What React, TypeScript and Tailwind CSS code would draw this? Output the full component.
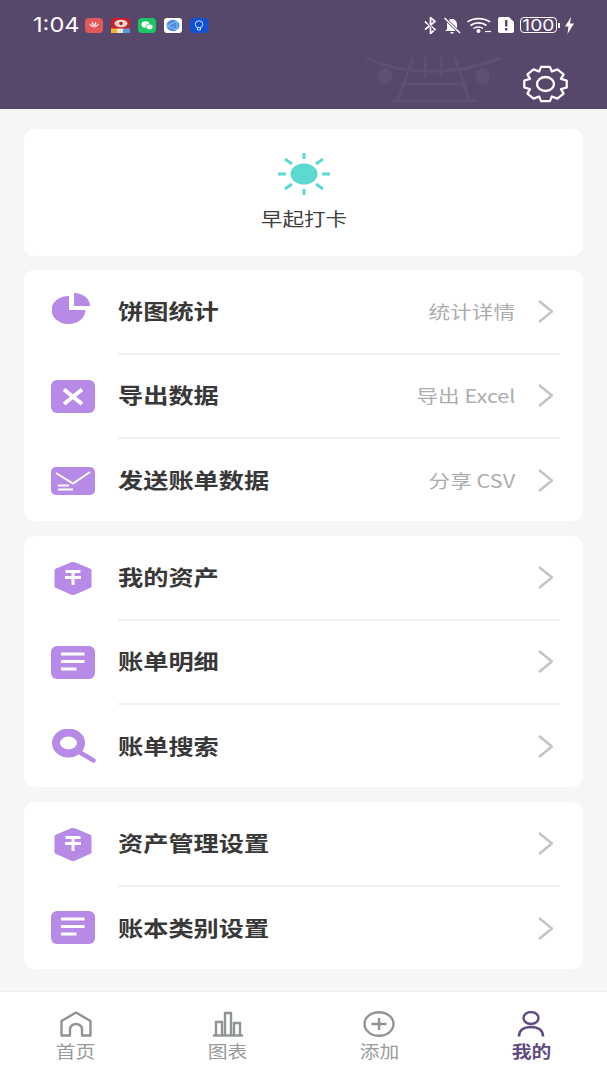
import React from "react";

const PURPLE = "#b68ae6";
const font = { fontFamily: '"Noto Sans CJK SC", "Noto Sans", sans-serif' };

function T({ children, className = "" }: { children: React.ReactNode; className?: string }) {
  return <span className={"inline-block whitespace-nowrap scale-x-[1.2] " + className}>{children}</span>;
}

function Svg({ w, h, vb, children, className = "" }: { w: number; h: number; vb: string; children: React.ReactNode; className?: string }) {
  return (
    <svg width={w} height={h} viewBox={vb} preserveAspectRatio="none" className={"block shrink-0 " + className}>
      {children}
    </svg>
  );
}

const PieIcon = () => (
  <Svg w={38} h={31} vb="0 0 38 31" className="mb-[7px]">
    <path d="M17 3A17 14 0 1 0 33.500 17H17z" fill={PURPLE} />
    <path d="M22 0A16 13 0 0 1 38 13H22z" fill={PURPLE} />
  </Svg>
);
const XIcon = () => (
  <Svg w={44} h={33} vb="0 0 44 33">
    <rect width="44" height="33" rx="6" fill={PURPLE} />
    <path d="M13 9.500l18 14.500M31 9.500L13 24" stroke="#fff" strokeWidth="4" />
  </Svg>
);
const MailIcon = () => (
  <Svg w={44} h={28} vb="0 0 44 28" className="mt-[1px]">
    <rect width="44" height="28" rx="5" fill={PURPLE} />
    <path d="M5 6l17 10.500L39 5" stroke="#fff" strokeWidth="2" fill="none" />
    <path d="M7 18.500h11M7 22.500h15" stroke="#fff" strokeWidth="2" />
  </Svg>
);
const HexIcon = () => (
  <Svg w={38} h={33} vb="0 0 38 33">
    <path d="M19 0l18 7.500v17.500L19 33 1 25V7.500z" fill={PURPLE} stroke={PURPLE} strokeLinejoin="round" />
    <path d="M11.500 9.500h15M11 15.500h16M19 10v13" stroke="#fff" strokeWidth="3" />
  </Svg>
);
const ListIcon = () => (
  <Svg w={44} h={33} vb="0 0 44 33">
    <rect width="44" height="33" rx="6" fill={PURPLE} />
    <path d="M10 8h23.500M10 15.500h23.500M10 23h15.500" stroke="#fff" strokeWidth="2.800" />
  </Svg>
);
const SearchIcon = () => (
  <Svg w={44} h={34} vb="0 0 44 34">
    <ellipse cx="16.500" cy="14" rx="12.500" ry="10.500" fill="none" stroke={PURPLE} strokeWidth="8" />
    <path d="M29 24l12.500 7.500" stroke={PURPLE} strokeWidth="4.500" strokeLinecap="round" />
  </Svg>
);

const Chevron = () => (
  <Svg w={15} h={23} vb="0 0 15 23">
    <path d="M1 1l13 10.500L1 22" fill="none" stroke="#c4c4c4" strokeWidth="2.600" />
  </Svg>
);

function Row({ icon, title, sub, last, iconOffset = 27 }: { icon: React.ReactNode; title: string; sub?: string; last?: boolean; iconOffset?: number }) {
  return (
    <div className={"flex items-stretch " + (last ? "flex-1" : "h-[84.500px] shrink-0")}>
      <div className="flex w-[94px] shrink-0 items-center" style={{ paddingLeft: iconOffset }}>{icon}</div>
      <div className={"mr-[23px] flex flex-1 items-center pr-[7px] " + (last ? "pt-[1px]" : "border-b-2 border-[#f1f1f1]")}>
        <T className="-mt-[2px] origin-left text-[21px] font-semibold text-[#383838]">{title}</T>
        <div className="flex-1" />
        {sub && <T className="mr-[23px] origin-right text-[18px] text-[#adadad]">{sub}</T>}
        <Chevron />
      </div>
    </div>
  );
}

function Card({ h, children, className = "" }: { h: number; children: React.ReactNode; className?: string }) {
  return (
    <div className={"mx-[24px] flex shrink-0 flex-col overflow-hidden rounded-[10px] bg-white " + className} style={{ height: h }}>
      {children}
    </div>
  );
}

function AppIcons() {
  return (
    <div className="ml-[7px] flex items-center gap-[8px]">
      <Svg w={18} h={15} vb="0 0 18 15">
        <rect width="18" height="15" rx="4" fill="#e25858" />
        <path d="M9 9C7 7 6 5 7 3.500 8 4 9 6 9 9c0-3 1-5 2-5.500C12 5 11 7 9 9zM9 9.500C7 9 4.500 8 4 5.500 6 6 8 8 9 9.500zm0 0c1-1.500 3-3.500 5-4-.5 2.500-3 3.500-5 4z" fill="#fff" opacity=".85" />
      </Svg>
      <Svg w={19} h={15} vb="0 0 19 15">
        <rect width="19" height="15" rx="3" fill="#c9202a" />
        <ellipse cx="10" cy="5.500" rx="6.500" ry="3.800" fill="#f3d9d2" />
        <circle cx="10" cy="5.500" r="1.800" fill="#c9202a" />
        <rect y="10.500" width="6" height="4.500" fill="#f2b632" />
        <rect x="6" y="10.500" width="6" height="4.500" fill="#f0e9d8" />
        <rect x="12" y="10.500" width="7" height="4.500" fill="#5b9bd8" />
      </Svg>
      <Svg w={18} h={15} vb="0 0 18 15">
        <rect width="18" height="15" rx="4" fill="#1fc465" />
        <ellipse cx="7.500" cy="6.500" rx="4" ry="3.300" fill="#fff" />
        <ellipse cx="11.500" cy="8.800" rx="3.500" ry="2.800" fill="#fff" stroke="#1fc465" strokeWidth=".7" />
      </Svg>
      <Svg w={18} h={15} vb="0 0 18 15">
        <rect width="18" height="15" rx="3" fill="#fff" />
        <ellipse cx="9" cy="7.500" rx="6.500" ry="5.800" fill="#4a90dc" />
        <path d="M3 8l10-5M3 8l10 4M13 3v9" stroke="#cfe3f7" strokeWidth=".6" fill="none" />
      </Svg>
      <Svg w={18} h={15} vb="0 0 18 15">
        <rect width="18" height="15" rx="4" fill="#0d52d6" />
        <ellipse cx="9" cy="6.300" rx="3.800" ry="3.500" fill="none" stroke="#cfe0ff" strokeWidth="1" />
        <path d="M7.500 10v2h3v-2" fill="none" stroke="#cfe0ff" strokeWidth="1" />
      </Svg>
    </div>
  );
}

function StatusRight() {
  return (
    <div className="flex items-center">
      <Svg w={12} h={17} vb="0 0 12 17" className="mr-[7px]">
        <path d="M1 4.500l10 8-4.500 4V.5L11 4.500 1 12.500" fill="none" stroke="#fff" strokeWidth="1.700" />
        <path d="M0 1l12 15" stroke="#57476a" strokeWidth="1" />
      </Svg>
      <Svg w={18} h={17} vb="0 0 18 17" className="mr-[6px]">
        <path d="M4 12.500V7.500C4 4 6.500 2 9 2s5 2 5 5.500v5l2 1.500H2z" fill="#fff" />
        <path d="M7.500 15h3v1.500h-3z" fill="#fff" />
        <path d="M1.500 1L17 16" stroke="#57476a" strokeWidth="3" />
        <path d="M1.500 1L17 16" stroke="#fff" strokeWidth="1.500" />
      </Svg>
      <Svg w={25} h={16} vb="0 0 25 16" className="mr-[6px]">
        <path d="M0.500 5C6 .5 17 .5 23 5M3.500 8.500C8 5 15 5 19.500 8.500M6.500 11.500C9 9.500 13.500 9.500 16 11.500" fill="none" stroke="#fff" strokeWidth="1.600" />
        <circle cx="11.500" cy="14" r="2" fill="#fff" />
        <path d="M18 14.500h6" stroke="#fff" strokeWidth="1.200" />
      </Svg>
      <Svg w={16} h={16} vb="0 0 16 16" className="mr-[6px]">
        <path d="M2 0h9l5 5v9a2 2 0 0 1-2 2H2a2 2 0 0 1-2-2V2a2 2 0 0 1 2-2z" fill="#fff" />
        <path d="M7 3h2.400v6.500H7zM7 11h2.400v2.500H7z" fill="#57476a" />
      </Svg>
      <div className="flex h-[16px] w-[37px] items-center justify-center rounded-[4px] border border-white text-[16px] leading-none text-white" style={{ fontFamily: "Inter, sans-serif" }}>
        <T>100</T>
      </div>
      <div className="ml-[1px] mr-[5px] h-[5px] w-[2px] bg-white" />
      <Svg w={9} h={17} vb="0 0 9 17">
        <path d="M6 0L0 9.500h3.500L2.500 17 9 6.500H5z" fill="#fff" />
      </Svg>
    </div>
  );
}

function gearPoints() {
  const pts: string[] = [];
  const cx = 23.5;
  const cy = 19;
  const n = 8;
  for (let i = 0; i < n; i++) {
    const a = (i * 2 * Math.PI) / n - Math.PI / 2;
    const s = (2 * Math.PI) / n;
    const steps: [number, number][] = [
      [-0.5, 13.5],
      [-0.26, 17.5],
      [0.26, 17.5],
      [0.5, 13.5],
    ];
    for (const [off, r] of steps) {
      const t = a + off * s;
      pts.push(`${(cx + Math.cos(t) * r * 1.24).toFixed(1)},${(cy + Math.sin(t) * r).toFixed(1)}`);
    }
  }
  return pts.join(" ");
}

const Gear = () => (
  <Svg w={47} h={38} vb="0 0 47 38">
    <polygon points={gearPoints()} fill="none" stroke="#fff" strokeWidth="2.300" strokeLinejoin="round" />
    <ellipse cx="23.500" cy="19" rx="8.500" ry="7" fill="none" stroke="#fff" strokeWidth="2.300" />
  </Svg>
);

const tabIconColor = "#8f9494";
const tabs = [
  {
    label: "首页",
    icon: (
      <Svg w={32} h={26} vb="0 0 32 26">
        <path d="M1.500 24.500V10L16 1.500 30.500 10v14.500H22V18a6 5 0 0 0-12 0v6.500z" fill="none" stroke={tabIconColor} strokeWidth="2.400" strokeLinejoin="round" />
      </Svg>
    ),
  },
  {
    label: "图表",
    icon: (
      <Svg w={30} h={26} vb="0 0 30 26">
        <path d="M0 24.500h30" stroke={tabIconColor} strokeWidth="2.400" />
        <path d="M3 25V11h6v14M12 25V2h6v23M21 25V12h6v13" fill="none" stroke={tabIconColor} strokeWidth="2.400" />
      </Svg>
    ),
  },
  {
    label: "添加",
    icon: (
      <Svg w={32} h={26} vb="0 0 32 26">
        <ellipse cx="16" cy="13" rx="14.500" ry="11.800" fill="none" stroke={tabIconColor} strokeWidth="2.400" />
        <path d="M8.500 13h15M16 7v12" stroke={tabIconColor} strokeWidth="2.400" />
      </Svg>
    ),
  },
  {
    label: "我的",
    active: true,
    icon: (
      <Svg w={28} h={26} vb="0 0 28 26">
        <ellipse cx="14" cy="7" rx="7.500" ry="6" fill="none" stroke="#5f4b80" strokeWidth="2.400" />
        <path d="M2 25.500C2 19 7 16 14 16s12 3 12 9.500" fill="none" stroke="#5f4b80" strokeWidth="2.600" />
      </Svg>
    ),
  },
];

export default function App() {
  return (
    <div className="flex h-[1080px] w-[607px] flex-col overflow-hidden bg-[#f6f6f6]" style={font}>
      <header className="relative h-[109px] shrink-0 bg-[#57476a]">
        <svg width="140" height="55" viewBox="0 0 140 55" className="absolute left-[363px] top-[52px]">
          <g fill="none" stroke="#5f4f74" strokeWidth="3">
            <path d="M3 6c40 18 90 18 134 0" />
            <path d="M50 6L35 48M62 5v20M78 5v20M92 6l14 42M38 32h66M28 49h85" />
          </g>
          <ellipse cx="22" cy="24" rx="7" ry="8" fill="#5f4f74" />
          <ellipse cx="120" cy="24" rx="7" ry="8" fill="#5f4f74" />
        </svg>
        <div className="relative flex h-[34px] items-center justify-between pl-[33px] pr-[33px] pt-[16px]">
          <div className="flex items-center">
            <span className="inline-block w-[45px] origin-left scale-x-[1.15] text-[20.500px] leading-none text-white" style={{ fontFamily: "Inter, sans-serif" }}>1:04</span>
            <AppIcons />
          </div>
          <StatusRight />
        </div>
        <div className="relative flex justify-end pr-[38px] pt-[31px]">
          <Gear />
        </div>
      </header>

      <main className="flex flex-1 flex-col gap-[15px] pt-[20px]">
        <Card h={127} className="-mb-px">
          <div className="flex flex-col items-center pt-[24px]">
            <Svg w={52} h={42} vb="0 0 52 42">
              <ellipse cx="26" cy="21" rx="13.500" ry="10.500" fill="#5cd9d0" />
              <path d="M26 0v6M26 36v6M0 21h8M44 21h8M7 6l7 5M45 6l-7 5M7 36l7-5M45 36l-7-5" stroke="#5cd9d0" strokeWidth="3" />
            </Svg>
            <T className="mt-[10px] text-[18px] leading-[27px] text-[#3f3f3f]">早起打卡</T>
          </div>
        </Card>
        <Card h={251}>
          <Row icon={<PieIcon />} title="饼图统计" sub="统计详情" iconOffset={28} />
          <Row icon={<XIcon />} title="导出数据" sub="导出 Excel" />
          <Row icon={<MailIcon />} title="发送账单数据" sub="分享 CSV" last />
        </Card>
        <Card h={251}>
          <Row icon={<HexIcon />} title="我的资产" iconOffset={30} />
          <Row icon={<ListIcon />} title="账单明细" />
          <Row icon={<SearchIcon />} title="账单搜索" iconOffset={28} last />
        </Card>
        <Card h={167}>
          <Row icon={<HexIcon />} title="资产管理设置" iconOffset={30} />
          <Row icon={<ListIcon />} title="账本类别设置" last />
        </Card>
      </main>

      <nav className="grid h-[89px] shrink-0 grid-cols-4 border-t border-[#eeeeee] bg-white pt-[19px]">
        {tabs.map((t) => (
          <div key={t.label} className="flex flex-col items-center">
            {t.icon}
            <T className={"mt-[2px] text-[16.500px] leading-[24px] " + (t.active ? "font-bold text-[#5f4b80]" : "text-[#9a9a9a]")}>{t.label}</T>
          </div>
        ))}
      </nav>
    </div>
  );
}
